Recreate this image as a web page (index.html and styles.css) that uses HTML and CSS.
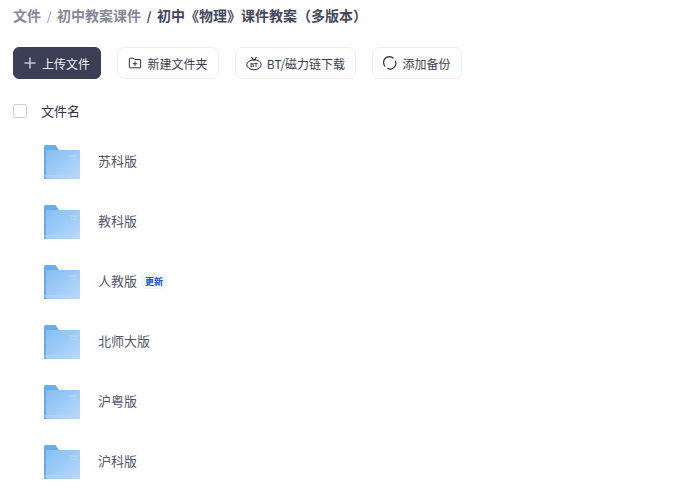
FILE: index.html
```html
<!DOCTYPE html>
<html lang="zh-CN">
<head>
<meta charset="utf-8">
<title>文件</title>
<link rel="stylesheet" href="styles.css">
</head>
<body>
<svg class="defs" width="0" height="0" aria-hidden="true">
  <defs>
    <linearGradient id="fback" x1="0" y1="0" x2="0" y2="1"><stop offset="0" stop-color="#6db1ea"/><stop offset="1" stop-color="#5fa6e4"/></linearGradient>
    <linearGradient id="ffront" x1="0" y1="0" x2="1" y2="1"><stop offset="0" stop-color="#83bdf3"/><stop offset="1" stop-color="#b9d9fb"/></linearGradient>
    <symbol id="folder" viewBox="0 0 36 34">
      <path d="M0 1.500Q0 0 1.500 0H11.500L15 5H32V11H0Z" fill="url(#fback)"/>
      <path d="M32 5L36 7V11H32Z" fill="#e3eefa"/>
      <path d="M0 5H36V34H0Z" fill="url(#ffront)"/>
      <path d="M0 5H2V34H0Z" fill="#68abe6"/>
      <path d="M25 11H33M27 14H33M0 31H36" stroke="#b6d7f8" stroke-width="1" fill="none"/>
    </symbol>
  </defs>
</svg>
<main class="page">
  <nav class="crumbs">
    <span class="crumb">文件</span><span class="sep">/</span>
    <span class="crumb">初中教案课件</span><span class="sep sep-strong">/</span>
    <span class="crumb-current">初中《物理》课件教案（多版本）</span>
  </nav>
  <div class="toolbar">
    <button class="btn btn-primary">
      <svg class="ico-plus" viewBox="0 0 14 14"><path d="M7 .5V13.500M.5 7H13.500" stroke="#c4c6cf" stroke-width="1.800" fill="none"/></svg>
      上传文件
    </button>
    <button class="btn btn-folder">
      <svg class="ico" viewBox="0 0 16 16"><path d="M1.500 3.500Q1.500 2.500 2.500 2.500H6L7.500 4H14Q14.500 4 14.500 4.500V13Q14.500 13.500 14 13.500H2Q1.500 13.500 1.500 13ZM8 6.300V11.300M5.500 8.800H10.500" stroke="#26283a" stroke-width="1.100" fill="none"/></svg>
      新建文件夹
    </button>
    <button class="btn btn-bt">
      <svg class="ico ico-bt" viewBox="0 0 16 16"><ellipse cx="8" cy="9.800" rx="7.200" ry="5" stroke="#26283a" stroke-width="1" fill="none"/><path d="M5.500 2L7.300 4.800H8.700L10.500 2" stroke="#26283a" stroke-width="1.200" fill="none"/><text class="bt-label" x="8" y="12" text-anchor="middle">BT</text></svg>
      BT/磁力链下载
    </button>
    <button class="btn btn-backup">
      <svg class="ico" viewBox="0 0 16 16"><path d="M2.600 12A6.500 6.500 0 0 1 12 2.600M14 5.500A6.500 6.500 0 0 1 5 14" stroke="#26283a" stroke-width="1.300" fill="none"/></svg>
      添加备份
    </button>
  </div>
  <div class="list-head">
    <span class="check"></span>
    <span class="head-name">文件名</span>
  </div>
  <ul class="list">
    <li class="row"><svg class="folder"><use href="#folder"/></svg><span class="name">苏科版</span></li>
    <li class="row"><svg class="folder"><use href="#folder"/></svg><span class="name">教科版</span></li>
    <li class="row"><svg class="folder"><use href="#folder"/></svg><span class="name">人教版</span><span class="tag">更新</span></li>
    <li class="row"><svg class="folder"><use href="#folder"/></svg><span class="name">北师大版</span></li>
    <li class="row"><svg class="folder"><use href="#folder"/></svg><span class="name">沪粤版</span></li>
    <li class="row"><svg class="folder"><use href="#folder"/></svg><span class="name">沪科版</span></li>
  </ul>
</main>
</body>
</html>
```
FILE: styles.css
```css
* { box-sizing: border-box; }
html, body { margin: 0; height: 100%; overflow: hidden; background: #fff; }
body { font-family: "Noto Sans CJK SC", "Liberation Sans", sans-serif; color: #3a3d52; }
.defs { display: block; height: 0; }
.page { padding: 5px 0 0 13px; }
.crumbs { display: flex; align-items: center; height: 20px; font-size: 14px; font-weight: 700; }
.crumb { color: #85889a; }
.sep { display: flex; justify-content: center; width: 16px; color: #8d8f9c; font-weight: 400; font-size: 12px; }
.sep-strong { color: #33364a; font-weight: 700; }
.crumb-current { color: #44475c; }
.toolbar { display: flex; gap: 16px; margin-top: 22px; }
.btn {
  display: flex; align-items: center; justify-content: center; height: 32px; padding: 0;
  font: 400 12px "Noto Sans CJK SC", "Liberation Sans", sans-serif; color: #3a3d50;
  background: #fff; border: 1px solid #eceef1; border-radius: 7px;
}
.btn-primary { width: 88px; gap: 6px; background: #3b3e55; border-color: #3b3e55; color: #f1f2f5; border-radius: 6px; }
.btn-folder { width: 102px; gap: 5px; }
.btn-bt { width: 121px; gap: 5px; }
.btn-backup { width: 90px; gap: 5px; }
.ico-plus { width: 12px; height: 12px; }
.ico { width: 14px; height: 14px; flex: none; }
.ico-bt { width: 16px; height: 16px; }
.bt-label { font: 700 5.500px "Liberation Sans", sans-serif; fill: #26283a; }
.list-head { display: flex; align-items: center; height: 20px; margin-top: 22px; font-size: 13px; color: #2f3244; }
.check { width: 14px; height: 14px; border: 1px solid #cfd1d6; border-radius: 2px; }
.head-name { margin-left: 14px; margin-bottom: 2px; }
.list { list-style: none; margin: 11px 0 0; padding: 0 0 0 31px; }
.row { display: flex; align-items: center; height: 60px; }
.folder { width: 36px; height: 34px; flex: none; }
.name { margin-left: 18px; font-size: 13px; line-height: 18px; margin-bottom: 3px; color: #53566a; }
.tag {
  margin-left: 4px; padding: 0 4px; height: 15px; line-height: 15px; font-size: 9px; font-weight: 700;
  color: #2350d8; background: #f2f6fd; border-radius: 4px; margin-bottom: 1px;
}
```
